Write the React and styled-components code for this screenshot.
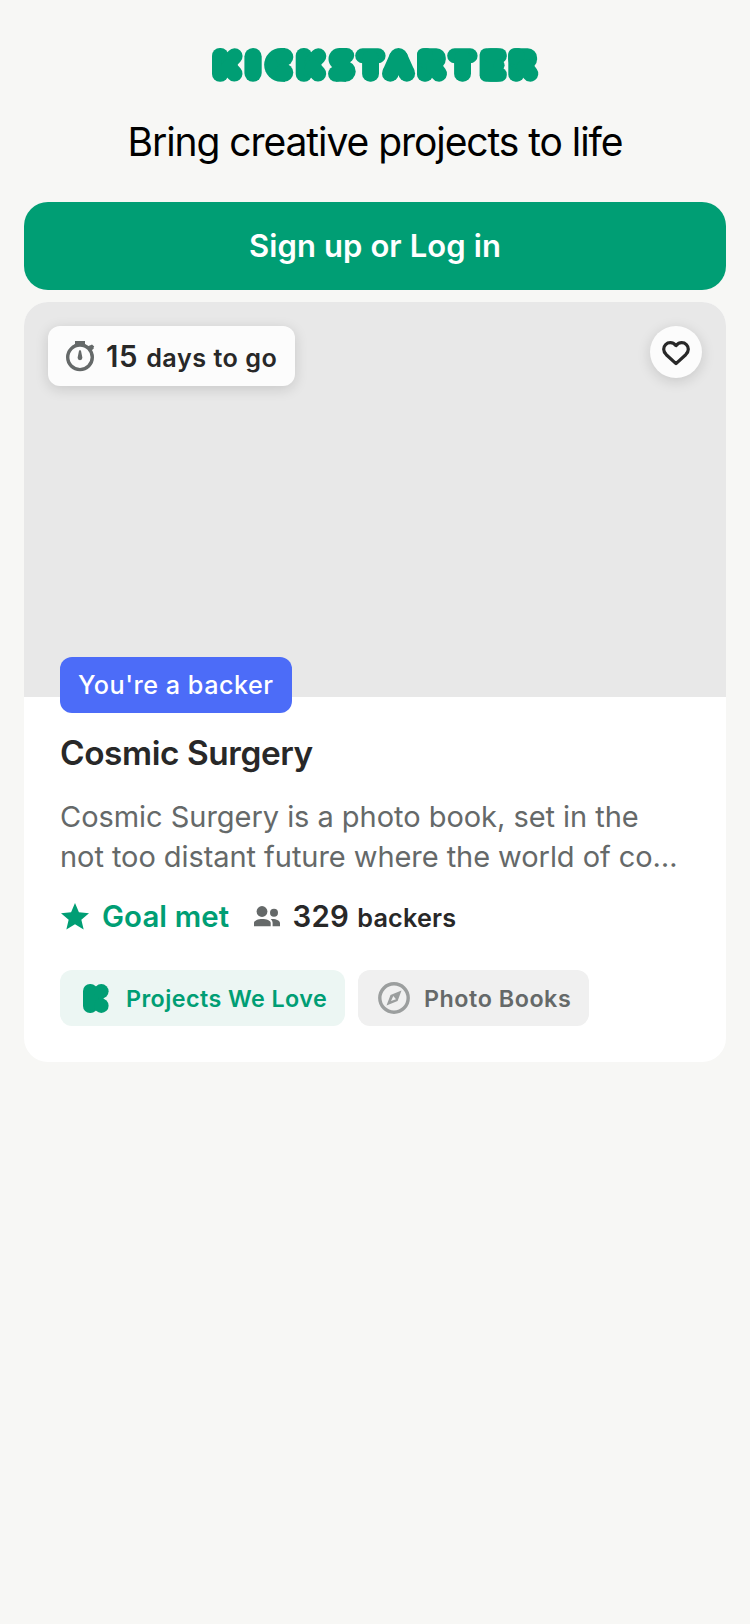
import React from "react";
import styled, { createGlobalStyle } from "styled-components";

const color = {
  page: "#f7f7f5",
  green: "#009e74",
  ink: "#282828",
  muted: "#656969",
  faint: "#9b9e9e",
  blue: "#4c6cf8",
};

const GlobalStyle = createGlobalStyle`
  * { box-sizing: border-box; }
  body {
    margin: 0;
    background: ${color.page};
    color: ${color.ink};
    font-family: Inter, "Liberation Sans", sans-serif;
  }
`;

const Screen = styled.main`
  display: flex;
  flex-direction: column;
  min-height: 1624px;
  padding: 48px 24px 0;
`;

const Header = styled.header`
  display: flex;
  flex-direction: column;
  align-items: center;
  gap: 36px;
`;

const Wordmark = styled.svg`
  display: block;
  width: 326px;
  height: 34px;
  overflow: visible;
  fill: ${color.green};
  stroke: ${color.green};
  stroke-width: 0;
  stroke-linecap: round;
`;

const Tagline = styled.h1`
  margin: 0;
  color: #000;
  font-size: 39px;
  font-weight: 400;
  line-height: 48px;
  white-space: nowrap;
  letter-spacing: ${(p) => p.$track}px;
`;

const PrimaryButton = styled.button`
  height: 88px;
  margin: 36px 0 12px;
  padding: 0;
  border: 0;
  border-radius: 24px;
  background: ${color.green};
  color: #fff;
  font: 600 31px/88px Inter, sans-serif;
  letter-spacing: ${(p) => p.$track}px;
`;

const Card = styled.article`
  border-radius: 24px;
  background: #fff;
`;

const Cover = styled.div`
  position: relative;
  display: flex;
  justify-content: space-between;
  align-items: flex-start;
  height: 395px;
  padding: 24px;
  border-radius: 24px 24px 0 0;
  background: #e8e8e8;
`;

const Deadline = styled.div`
  display: flex;
  align-items: center;
  gap: 11px;
  width: 247px;
  height: 60px;
  padding-left: 17px;
  border-radius: 12px;
  background: #fcfcfc;
  box-shadow: 0 3px 14px rgba(0, 0, 0, 0.14);
`;

const SaveButton = styled.button`
  display: flex;
  align-items: center;
  justify-content: center;
  width: 52px;
  height: 52px;
  padding: 2px 0 0;
  border: 0;
  border-radius: 50%;
  background: #fcfcfc;
  box-shadow: 0 3px 14px rgba(0, 0, 0, 0.14);
`;

const BackerFlag = styled.div`
  position: absolute;
  left: 36px;
  bottom: -16px;
  width: 232px;
  height: 56px;
  padding-left: 18px;
  border-radius: 12px;
  background: ${color.blue};
  color: #fff;
  font-size: 25.2px;
  font-weight: 500;
  line-height: 56px;
  white-space: nowrap;
  letter-spacing: ${(p) => p.$track}px;
`;

const Details = styled.div`
  display: flex;
  flex-direction: column;
  padding: 36px;
`;

const Title = styled.h2`
  margin: 0 0 24px;
  font-size: 33.4px;
  font-weight: 600;
  line-height: 40px;
  letter-spacing: ${(p) => p.$track}px;
`;

const Blurb = styled.p`
  margin: 0 0 21px;
  color: ${color.muted};
  font-size: 29px;
  line-height: 40px;
`;

const BlurbLine = styled.span`
  display: block;
  white-space: nowrap;
  letter-spacing: ${(p) => p.$track}px;
`;

const Stats = styled.div`
  display: flex;
  align-items: center;
  height: 36px;
  padding-left: 1px;
  margin-bottom: 36px;
`;

const Stat = styled.div`
  display: flex;
  align-items: center;
  gap: ${(p) => p.$gap}px;
  width: ${(p) => p.$width}px;
`;

const Measure = styled.div`
  display: flex;
  align-items: baseline;
  gap: 8px;
  padding-top: ${(p) => p.$drop || 0}px;
  line-height: 36px;
  white-space: nowrap;
`;

const Figure = styled.span`
  color: ${(p) => p.$color || color.ink};
  font-size: 29.4px;
  font-weight: 600;
  letter-spacing: ${(p) => p.$track}px;
`;

const Unit = styled.span`
  font-size: 25.2px;
  font-weight: 600;
  letter-spacing: ${(p) => p.$track}px;
`;

const Tags = styled.div`
  display: flex;
  gap: 13px;
`;

const Tag = styled.div`
  display: flex;
  align-items: center;
  gap: ${(p) => p.$gap}px;
  width: ${(p) => p.$width}px;
  height: 56px;
  padding-left: ${(p) => p.$inset}px;
  border-radius: 12px;
  background: ${(p) => p.$fill};
  color: ${(p) => p.$color};
  font-size: 23.3px;
  font-weight: 600;
  white-space: nowrap;
  letter-spacing: ${(p) => p.$track}px;
`;

const Icon = styled.svg`
  display: block;
  flex: none;
  overflow: visible;
`;

const BlockK = ({ x }) => (
  <g transform={`translate(${x} 0)`}>
    <rect x="0" y="0" width="16.4" height="33.7" rx="7.8" />
    <rect x="8" y="5" width="17.5" height="23.6" rx="3" />
    <line x1="17" y1="14" x2="22.6" y2="8.2" strokeWidth="16" />
    <line x1="17" y1="19.5" x2="22.5" y2="25.6" strokeWidth="16" />
  </g>
);

const BlockT = ({ x }) => (
  <g transform={`translate(${x} 0)`}>
    <rect x="0" y="0.3" width="30.4" height="15" rx="7.5" />
    <rect x="6.9" y="3" width="16.9" height="30.7" rx="8" />
  </g>
);

const BlockR = ({ x }) => (
  <g transform={`translate(${x} 0)`}>
    <rect x="0" y="0.3" width="16" height="33.4" rx="7.2" />
    <rect x="0" y="0.3" width="28.8" height="20.5" rx="9.5" />
    <rect x="0" y="0.3" width="16" height="16" rx="6" />
    <rect x="8" y="14" width="17.5" height="15" rx="3" />
    <line x1="17" y1="19" x2="22" y2="25.7" strokeWidth="16" />
  </g>
);

const Logo = () => (
  <Wordmark viewBox="0 0 326 34" role="img" aria-label="Kickstarter">
    <BlockK x={0} />
    <rect x="32.4" y="0" width="17.3" height="33.7" rx="8.6" />
    <g>
      <path d="M69 0a16.85 16.85 0 0 0 0 33.7h4V0z" />
      <circle cx="72.2" cy="9.1" r="9.1" />
      <circle cx="72.2" cy="24.6" r="9.1" />
    </g>
    <BlockK x={83.7} />
    <g>
      <circle cx="127.5" cy="11" r="11" />
      <rect x="127" y="0" width="15.2" height="15" rx="7.5" />
      <rect x="127" y="0" width="8" height="20" />
      <circle cx="133.4" cy="23.4" r="10.3" />
      <circle cx="124" cy="25.8" r="7.9" />
      <rect x="124" y="22" width="10" height="11.7" />
      <rect x="128" y="10" width="9" height="12" />
    </g>
    <BlockT x={143.2} />
    <g>
      <circle cx="186.5" cy="9.2" r="9.2" />
      <circle cx="178.3" cy="25.4" r="8.3" />
      <circle cx="194.8" cy="25.4" r="8.3" />
      <polygon points="178.2,5.2 194.8,5.2 202.3,22 198,29 186.6,27.500 175,29 170.8,22" />
    </g>
    <BlockR x={205} />
    <BlockT x={235.2} />
    <g>
      <rect x="267.6" y="0.3" width="23.6" height="33.4" rx="6.5" />
      <rect x="272" y="0.3" width="22.8" height="14.6" rx="6.6" />
      <circle cx="287" cy="17.2" r="5.6" />
      <rect x="272" y="19.6" width="22.8" height="14.1" rx="6.6" />
    </g>
    <BlockR x={296.3} />
  </Wordmark>
);

const TimerIcon = () => (
  <Icon width="30" height="32" viewBox="0 0 30 32">
    <circle cx="15" cy="17.3" r="12.3" fill="none" stroke={color.muted} strokeWidth="3.4" />
    <path d="M10 1h10v3l1.5 2h-13L10 4z" fill={color.muted} />
    <path d="M21.500 6.800l4.500-1.800 1-.6 2.200 2.200-.7 1.200.3.800-2.600 2.200z" fill={color.muted} />
    <path
      d="M15 10.200c.8 0 1 .4 1.100 1.100l1.300 6.500a2.400 2.400 0 1 1-4.800 0l1.300-6.500c.1-.7.300-1.100 1.100-1.100z"
      fill={color.muted}
    />
  </Icon>
);

const HeartIcon = () => (
  <Icon width="28" height="26" viewBox="0 0 28 26" fill="none" stroke={color.ink} strokeWidth="3.2">
    <path
      d="M14 5.6C12 3.300 10.300 2.700 8.300 2.700 4.600 2.700 1.700 5.500 1.700 9.200c0 2.300 1 3.900 2.600 5.500L14 23.600l9.700-8.900c1.600-1.600 2.600-3.200 2.600-5.500 0-3.700-2.900-6.500-6.600-6.500-2 0-3.700.6-5.700 2.900z"
      strokeLinejoin="round"
    />
  </Icon>
);

const StarIcon = () => (
  <Icon width="28" height="26.6" viewBox="2 2 20 19" fill={color.green}>
    <path d="M12 17.27 18.18 21l-1.64-7.03L22 9.24l-7.19-.61L12 2 9.190 8.630 2 9.240l5.460 4.730L5.820 21z" />
  </Icon>
);

const PeopleIcon = () => (
  <Icon width="26" height="21" viewBox="0 0 26 21" fill={color.muted}>
    <circle cx="8" cy="5.500" r="5.400" />
    <circle cx="20" cy="6.700" r="4" />
    <path d="M0 20.300v-3.300c0-2.500 4.200-4 8.300-4s8.400 1.500 8.400 4v3.300z" />
    <path d="M18.600 20.300H26v-3c0-2.700-4.200-4.600-9.300-4.100 1.300 1 1.900 2.300 1.900 3.800z" />
  </Icon>
);

const KBadge = () => (
  <Icon width="26" height="29" viewBox="0 0 26 29" fill={color.green}>
    <rect x="0" y="0" width="14.500" height="29" rx="7" />
    <rect x="6" y="2.800" width="14.600" height="23.400" rx="2" />
    <circle cx="18.300" cy="7.300" r="7.300" />
    <circle cx="18.300" cy="21.700" r="7.300" />
  </Icon>
);

const CompassIcon = () => (
  <Icon width="32" height="32" viewBox="0 0 32 32" fill={color.faint}>
    <circle cx="16" cy="16" r="14.200" fill="none" stroke={color.faint} strokeWidth="3.400" />
    <path
      fillRule="evenodd"
      d="M23.500 8.500 19.600 19 8.500 23.500 12.500 13zM15.300 14 13 19 18 17.200z"
    />
  </Icon>
);

export default function App() {
  return (
    <Screen>
      <GlobalStyle />
      <Header>
        <Logo />
        <Tagline $track={-1.06}>Bring creative projects to life</Tagline>
      </Header>
      <PrimaryButton $track={0.1}>Sign up or Log in</PrimaryButton>
      <Card>
        <Cover>
          <Deadline>
            <TimerIcon />
            <Measure $drop={2}>
              <Figure $track={0.6}>15</Figure>
              <Unit $track={0.5}>days to go</Unit>
            </Measure>
          </Deadline>
          <SaveButton aria-label="Save project">
            <HeartIcon />
          </SaveButton>
          <BackerFlag $track={0.5}>You're a backer</BackerFlag>
        </Cover>
        <Details>
          <Title $track={-0.42}>Cosmic Surgery</Title>
          <Blurb>
            <BlurbLine $track={-0.04}>Cosmic Surgery is a photo book, set in the</BlurbLine>
            <BlurbLine $track={-0.06}>not too distant future where the world of co…</BlurbLine>
          </Blurb>
          <Stats>
            <Stat $gap={13} $width={193}>
              <StarIcon />
              <Figure $color={color.green} $track={0.1}>Goal met</Figure>
            </Stat>
            <Stat $gap={12.5}>
              <PeopleIcon />
              <Measure $drop={2}>
                <Figure $track={0.3}>329</Figure>
                <Unit $track={0.2}>backers</Unit>
              </Measure>
            </Stat>
          </Stats>
          <Tags>
            <Tag $width={285} $inset={23} $gap={17} $fill="#ecf6f3" $color={color.green} $track={0.43}>
              <KBadge />
              Projects We Love
            </Tag>
            <Tag $width={231} $inset={20} $gap={14} $fill="#f0f0f0" $color={color.muted} $track={0.54}>
              <CompassIcon />
              Photo Books
            </Tag>
          </Tags>
        </Details>
      </Card>
    </Screen>
  );
}
